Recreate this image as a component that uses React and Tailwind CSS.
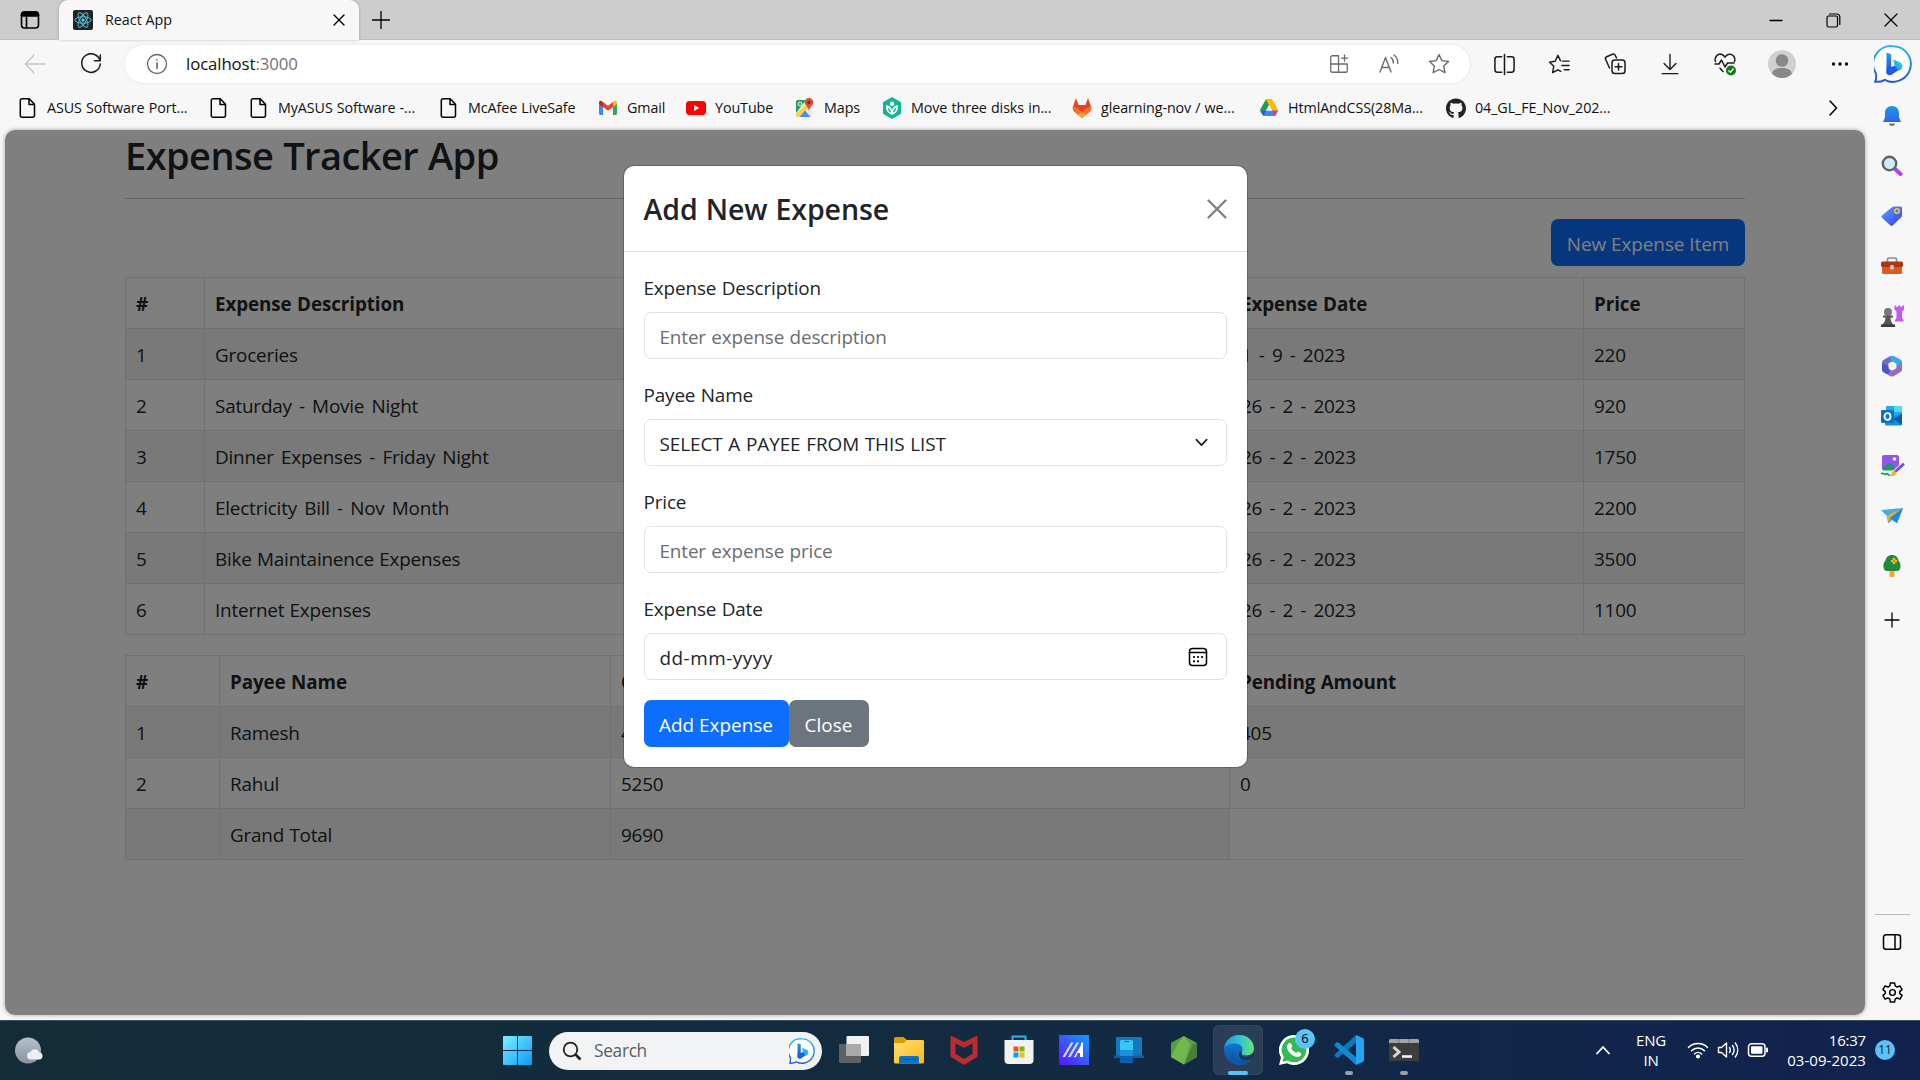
import React from "react";
import { FaGithub } from "react-icons/fa";

const line = { fill: "none", stroke: "currentColor", strokeLinecap: "round", strokeLinejoin: "round" };

/* ---------- browser chrome icons ---------- */

const DocIcon = () => (
  <svg width="20" height="22" viewBox="0 0 20 22" {...line} strokeWidth="1.5">
    <path d="M4 1.8h7.2l5.300 5.400v11.300a1.700 1.700 0 0 1-1.700 1.700H4a1.700 1.700 0 0 1-1.700-1.700v-15A1.700 1.700 0 0 1 4 1.800zM11 2v5.400h5.300" />
  </svg>
);
const GmailIcon = () => (
  <svg width="20" height="20" viewBox="0 0 20 20">
    <path d="M1 5v10.6C1 16.4 1.6 17 2.4 17H5V8z" fill="#4285f4" />
    <path d="M19 5v10.6c0 .8-.6 1.4-1.4 1.4H15V8z" fill="#34a853" />
    <path d="M15 4.3V9l4-3V4.5C19 2.700 17.200 2.200 16 3.200z" fill="#fbbc04" />
    <path d="M5 4.300V9L1 6V4.500C1 2.700 2.800 2.200 4 3.200z" fill="#c5221f" />
    <path d="M5 9V4l5 3.800L15 4v5l-5 3.800z" fill="#ea4335" />
  </svg>
);
const YoutubeIcon = () => (
  <svg width="20" height="20" viewBox="0 0 20 20">
    <rect x="0" y="3" width="20" height="14" rx="3.500" fill="#f00" />
    <path d="M8 7v6l5.200-3z" fill="#fff" />
  </svg>
);
const MapsIcon = () => (
  <svg width="20" height="20" viewBox="0 0 20 20">
    <rect x="1" y="2" width="16" height="17" rx="2" fill="#e8eaed" />
    <path d="M1 4a2 2 0 0 1 2-2h8L1 15z" fill="#1e9e58" />
    <path d="M1 16L14 4l3 2.500L4 19H2.500A1.500 1.500 0 0 1 1 17.500z" fill="#ffd04b" />
    <path d="M4.500 19L10 12.500 15.500 19z" fill="#4a89f3" />
    <circle cx="5" cy="6" r="1.900" fill="none" stroke="#fff" strokeWidth="1" />
    <path d="M14 0a4.300 4.300 0 0 1 4.300 4.300C18.300 7.500 14.700 8.500 14 13c-.7-4.500-4.300-5.500-4.300-8.700A4.300 4.300 0 0 1 14 0z" fill="#e04a3a" />
    <circle cx="14" cy="4.300" r="1.600" fill="#8c1f1a" />
  </svg>
);
const LeafIcon = () => (
  <svg width="20" height="22" viewBox="0 0 20 22">
    <path d="M10 0l9 5.200v11.600L10 22l-9-5.200V5.200z" fill="#0fb597" />
    <circle cx="10" cy="6.800" r="2.200" fill="#fff" />
    <path d="M4 8c-.5 5 1.500 8.300 6 9.800 4.500-1.500 6.500-4.800 6-9.800-3 .5-5 2-6 5-1-3-3-4.500-6-5z" fill="#fff" />
    <path d="M5.800 10.500c.2 2.600 1.200 4.300 3.300 5.300-.2-2.300-1.300-4.300-3.300-5.300zm8.400 0c-.2 2.600-1.200 4.300-3.300 5.300.2-2.300 1.300-4.300 3.300-5.300z" fill="#0fb597" />
  </svg>
);
const GitlabIcon = () => (
  <svg width="20" height="22" viewBox="0 0 20 22">
    <path d="M4 1L1 9.500c-.6 2 0 4 1.500 5.300L10 21l7.500-6.200c1.500-1.300 2.100-3.300 1.500-5.300L16 1l-2.600 7H6.600z" fill="#e24329" />
    <path d="M1 9.500c-.6 2 0 4 1.500 5.300L10 21l7.500-6.200c1.500-1.300 2.100-3.300 1.500-5.300-2 .4-3.500 1.200-5 2.300L10 15l-4-3.200C4.500 10.700 3 9.900 1 9.500z" fill="#fc6d26" />
    <path d="M6 17.700L10 15l4 2.700-4 3.300z" fill="#fca326" />
  </svg>
);
const DriveIcon = () => (
  <svg width="20" height="20" viewBox="0 0 20 20">
    <path d="M6.800 1.500h6.400L4.300 17.500 1 12z" fill="#1e9e50" />
    <path d="M6.800 1.500h6.400L19 12h-6z" fill="#ffba00" />
    <path d="M4 12.500h15l-3 5.500H4.500z" fill="#4285f4" />
    <path d="M1 12.500L4.200 18l3-5.500z" fill="#1967d2" />
    <path d="M19 12.500L16 18l-3-5.500z" fill="#ea4335" />
    <path d="M10 7l3 5.500H7z" fill="#f7f7f7" />
  </svg>
);
const GithubIcon = () => <FaGithub size={21} color="#1f2328" />;

const ReactLogo = () => (
  <svg width="20" height="20" viewBox="0 0 20 20">
    <rect width="20" height="20" rx="2" fill="#222" />
    <g fill="none" stroke="#53c1de" strokeWidth="1">
      <ellipse cx="10" cy="10" rx="8.200" ry="3.200" />
      <ellipse cx="10" cy="10" rx="8.200" ry="3.200" transform="rotate(60 10 10)" />
      <ellipse cx="10" cy="10" rx="8.200" ry="3.200" transform="rotate(120 10 10)" />
    </g>
    <circle cx="10" cy="10" r="1.600" fill="#61dafb" />
  </svg>
);

const BingChat = ({ width, height }) => (
  <svg width={width} height={height} viewBox="0 0 38 38" className="shrink-0">
    <defs>
      <linearGradient id="bingRing" x1="0" y1="0" x2="0" y2="1">
        <stop offset="0" stopColor="#29b6f0" />
        <stop offset="1" stopColor="#2456dd" />
      </linearGradient>
      <linearGradient id="bingStem" x1="0" y1="0" x2="0" y2="1">
        <stop offset="0" stopColor="#2b9cf2" />
        <stop offset="1" stopColor="#1b46d8" />
      </linearGradient>
      <linearGradient id="bingBowl" x1="1" y1="0" x2="0" y2="1">
        <stop offset="0" stopColor="#35e0e0" />
        <stop offset="1" stopColor="#1d8cf0" />
      </linearGradient>
    </defs>
    <path d="M19 1.200a17.800 17.800 0 1 1-8.200 33.600c-2.800 1.700-6 2.200-9.600 2 1.200-2.600 1.200-5 .8-8.300A17.800 17.800 0 0 1 19 1.200z" fill="#fff" stroke="url(#bingRing)" strokeWidth="2" />
    <path d="M12.500 7.500l4.700 1.800v16.500l-4.700 3z" fill="url(#bingStem)" />
    <path d="M12.500 24l9-3.800 5.500 3.300-9.500 6.300c-2.300 1.200-5 0-5-2.500z" fill="#1f5ce8" />
    <path d="M19 14.500l6.500 2.400c3.800 1.600 4 6 .6 8l-1.600.9-3.400-4.100z" fill="url(#bingBowl)" />
  </svg>
);

const Tool = ({ children, w = "w-[55px]", color = "text-[#1b1b1b]" }) => (
  <div className={`flex h-full shrink-0 items-center justify-center ${w} ${color}`}>{children}</div>
);
const Svg = ({ s = 24, sw = 1.4, children }) => (
  <svg width={s} height={s} viewBox="0 0 24 24" {...line} strokeWidth={sw}>{children}</svg>
);

function TabStrip() {
  return (
    <div className="flex h-10 items-stretch bg-[#cdcdcd]">
      <div className="flex w-[59px] items-center justify-center rounded-br-md shadow-[inset_0_-1px_0_#bdbdbd]">
        <svg width="20" height="20" viewBox="0 0 20 20" {...line} strokeWidth="1.600">
          <rect x="1.500" y="2" width="17" height="16" rx="3" />
          <path d="M6.500 6v12" />
          <path d="M1.500 6V5a3 3 0 0 1 3-3h11a3 3 0 0 1 3 3v1z" fill="#000" />
        </svg>
      </div>
      <div className="flex w-[300px] items-center rounded-t-[9px] bg-[#f7f7f7] pr-[11px] pl-[14px] shadow-[0_0_3px_rgba(0,0,0,0.25)]">
        <ReactLogo />
        <span className="ml-[12px] flex-1 text-[14.300px] text-[#111]">React App</span>
        <svg width="18" height="18" viewBox="0 0 18 18" {...line} strokeWidth="1.400"><path d="M4 4l10 10M14 4L4 14" /></svg>
      </div>
      <div className="flex w-[44px] items-center justify-center shadow-[inset_0_-1px_0_#bdbdbd]">
        <svg width="20" height="20" viewBox="0 0 20 20" {...line} strokeWidth="1.300"><path d="M10 1.500v17M1.500 10h17" /></svg>
      </div>
      <div className="flex flex-1 items-center justify-end shadow-[inset_0_-1px_0_#bdbdbd]">
        <div className="flex w-[58px] justify-center"><svg width="14" height="14" {...line} strokeWidth="1.300"><path d="M1 7.500h12" /></svg></div>
        <div className="flex w-[57px] justify-center">
          <svg width="15" height="15" viewBox="0 0 15 15" {...line} strokeWidth="1.200">
            <rect x="1" y="3" width="10.500" height="11" rx="1.500" />
            <path d="M3.500 1h7.500a2.800 2.800 0 0 1 2.800 2.800V11.500" />
          </svg>
        </div>
        <div className="flex w-[58px] justify-center"><svg width="14" height="14" viewBox="0 0 14 14" {...line} strokeWidth="1.200"><path d="M1 1l12 12M13 1L1 13" /></svg></div>
      </div>
    </div>
  );
}

function Toolbar() {
  return (
    <div className="flex h-[48px] items-center">
      <div className="flex w-[70px] justify-center text-[#c4c4c4]">
        <svg width="22" height="22" viewBox="0 0 22 22" {...line} strokeWidth="1.400"><path d="M21 11H1.500M10 2L1.500 11l8.500 9" /></svg>
      </div>
      <div className="flex w-[42px] justify-center text-[#1b1b1b]">
        <svg width="22" height="22" viewBox="0 0 22 22" {...line} strokeWidth="1.500"><path d="M20 7.500A9.300 9.300 0 1 0 20.300 11M20.300 2v5.800H14.500" /></svg>
      </div>
      <div className="ml-[13px] flex h-[38px] w-[1345px] items-center rounded-full bg-white pl-[21px] shadow-[0_0_3px_rgba(0,0,0,0.1)]">
        <svg width="22" height="22" viewBox="0 0 22 22" className="text-[#666]" {...line} strokeWidth="1.300"><circle cx="11" cy="11" r="9.500" /><path d="M11 10v5.500M11 6.700v.2" strokeWidth="1.600" /></svg>
        <span className="ml-[18px] flex-1 text-[16.800px] tracking-[-0.1px] text-[#111]">localhost<span className="text-[#747474]">:3000</span></span>
        <div className="flex w-[156px] items-center text-[#6b6b6b]">
          <Tool w="w-[50px]" color="text-[#6b6b6b]">
            <Svg s={22}><path d="M11.500 3H4.500A1.500 1.500 0 0 0 3 4.500v15A1.500 1.500 0 0 0 4.500 21h15a1.500 1.500 0 0 0 1.500-1.500v-7M3 12h18M11.500 3v18M18 2v7M14.500 5.500h7" /></Svg>
          </Tool>
          <Tool w="w-[50px]" color="text-[#6b6b6b]">
            <Svg s={24}><path d="M3 20L8.500 5.500 14 20M5 15.500h7M14 5.500c1.700 1.300 2.500 3.300 2.300 5.500M17 3c2.800 2 4 5 3.700 8.500" /></Svg>
          </Tool>
          <Tool w="w-[50px]" color="text-[#6b6b6b]">
            <Svg s={24}><path d="M12 2.500l2.900 6.100 6.600.9-4.800 4.600 1.200 6.600-5.900-3.200-5.900 3.200 1.200-6.600L2.500 9.500l6.600-.9z" /></Svg>
          </Tool>
        </div>
      </div>
      <div className="ml-[7px] flex flex-1 items-center">
        <Tool>
          <Svg s={23} sw={1.600}><path d="M9 4H4.500A2.500 2.500 0 0 0 2 6.500v11A2.500 2.500 0 0 0 4.500 20H9M15 4h4.500A2.500 2.500 0 0 1 22 6.500v11a2.500 2.500 0 0 1-2.500 2.500H15M12 1.500v21" /></Svg>
        </Tool>
        <Tool>
          <Svg s={23} sw={1.500}><path d="M15 8.500h7M14.500 13H22M17 17.500h5M13 8l-2.700-5.500L7.500 8.600l-6 .9 4.500 4.400-1.200 6.600 5.500-3 3 1.600" /></Svg>
        </Tool>
        <Tool w="w-[55px]">
          <Svg s={24} sw={1.500}><path d="M6.500 16L2.600 7.300a2 2 0 0 1 1-2.600l6-2.500a2 2 0 0 1 2.600 1L13.500 6" /><rect x="9" y="8" width="13" height="13.500" rx="2.800" /><path d="M15.500 11.500v6.500M12.200 14.800h6.600" /></Svg>
        </Tool>
        <Tool>
          <Svg s={22} sw={1.500}><path d="M12 1.500v16M5.500 11.500l6.500 6.500 6.500-6.500M3.500 22.500h17" /></Svg>
        </Tool>
        <Tool>
          <svg width="24" height="26" viewBox="0 0 24 26" {...line} strokeWidth="1.500">
            <path d="M10 20.500L7 17.200M2.500 10.500C1 6 5 2 9 3.500c1.500.6 2.300 1.500 3 2.700.700-1.200 1.500-2.100 3-2.700 4-1.500 8 2.500 6.500 7M2 13h4l2.500-4 3.500 7 2.500-4h6.500" />
            <circle cx="18" cy="19.500" r="5" fill="#107c10" stroke="none" />
            <path d="M15.800 19.700l1.600 1.500 2.800-3.200" stroke="#fff" strokeWidth="1.300" />
          </svg>
        </Tool>
        <Tool w="w-[60px]">
          <svg width="28" height="28" viewBox="0 0 28 28">
            <circle cx="14" cy="14" r="14" fill="#d2d0ce" />
            <circle cx="14" cy="10.500" r="6.300" fill="#8a8886" />
            <path d="M4 23.800C5 19.500 9 18 14 18s9 1.500 10 5.800A14 14 0 0 1 14 28a14 14 0 0 1-10-4.200z" fill="#8a8886" />
          </svg>
        </Tool>
        <Tool w="w-[56px]">
          <svg width="20" height="6" viewBox="0 0 20 6"><circle cx="3.500" cy="3" r="1.700" /><circle cx="10" cy="3" r="1.700" /><circle cx="16.500" cy="3" r="1.700" /></svg>
        </Tool>
        <Tool w="w-[49px]"><BingChat width={38} height={38} /></Tool>
      </div>
    </div>
  );
}

const bookmarks = [
  [DocIcon, "ASUS Software Port...", "w-[191px]"],
  [DocIcon, "", "w-[40px]"],
  [DocIcon, "MyASUS Software -...", "w-[190px]"],
  [DocIcon, "McAfee LiveSafe", "w-[159px]"],
  [GmailIcon, "Gmail", "w-[88px]"],
  [YoutubeIcon, "YouTube", "w-[109px]"],
  [MapsIcon, "Maps", "w-[87px]"],
  [LeafIcon, "Move three disks in...", "w-[190px]"],
  [GitlabIcon, "glearning-nov / we...", "w-[187px]"],
  [DriveIcon, "HtmlAndCSS(28Ma...", "w-[187px]"],
  [GithubIcon, "04_GL_FE_Nov_202...", "w-[190px]"],
];

function Bookmarks() {
  return (
    <div className="flex h-[40px] items-center pl-[18px]">
      {bookmarks.map(([Icon, text, w], i) => (
        <div key={i} className={`flex shrink-0 items-center gap-[9px] ${w}`}>
          <div className="flex w-5 shrink-0 justify-center"><Icon /></div>
          {text && <span className="text-[14.300px] tracking-[-0.080px] [word-spacing:0.500px] whitespace-nowrap text-[#111]">{text}</span>}
        </div>
      ))}
      <div className="flex flex-1 justify-end pr-[80px]">
        <svg width="14" height="18" viewBox="0 0 14 18" {...line} strokeWidth="1.500"><path d="M4 2L10.500 9 4 16" /></svg>
      </div>
    </div>
  );
}

/* ---------- edge sidebar ---------- */

const side = [
  <svg width="22" height="22" viewBox="0 0 22 22"><defs><linearGradient id="bell" x1="0" y1="0" x2="0" y2="1"><stop stopColor="#1c9be6" /><stop offset="1" stopColor="#2b63ea" /></linearGradient></defs><path d="M8 18.500h6a3 2.500 0 0 1-6 0z" fill="#777" /><path d="M11 1c4.500 0 7 3 7 7v4.500l2 4.500H2l2-4.500V8c0-4 2.500-7 7-7z" fill="url(#bell)" /></svg>,
  <svg width="22" height="22" viewBox="0 0 22 22"><path d="M14.500 14.500l5 4.500" stroke="#b43ef5" strokeWidth="4" strokeLinecap="round" /><circle cx="8.500" cy="8.500" r="6.700" fill="#cfeafc" stroke="#636363" strokeWidth="2.400" /></svg>,
  <svg width="22" height="22" viewBox="0 0 22 22"><defs><linearGradient id="tag" x1="0" y1="0" x2="1" y2="1"><stop stopColor="#5aa0fb" /><stop offset="1" stopColor="#3a3cf0" /></linearGradient></defs><path d="M13 1.500h6.500A1.500 1.500 0 0 1 21 3v7.500a2 2 0 0 1-.6 1.400L12 20.300a2 2 0 0 1-2.800 0L1.200 13a2 2 0 0 1 0-2.700l9.800-8a3 3 0 0 1 2-.8z" fill="url(#tag)" /><circle cx="16" cy="6" r="2.300" fill="#4b76e8" stroke="#f7c92e" strokeWidth="1.500" /></svg>,
  <svg width="24" height="22" viewBox="0 0 24 22"><path d="M7.500 7V4.500A1.500 1.500 0 0 1 9 3h6a1.500 1.500 0 0 1 1.500 1.500V7" fill="none" stroke="#8c8c8c" strokeWidth="1.600" /><rect x="2" y="11" width="20" height="8" rx="1.500" fill="#db5a20" /><rect x="1" y="6.500" width="22" height="5.500" rx="1.500" fill="#ad3510" /><rect x="10.200" y="10" width="3.600" height="4.500" rx="1" fill="#ccc" /></svg>,
  <svg width="24" height="24" viewBox="0 0 24 24"><path d="M14.500 1.500h1.800V3h1.700V1.500h2.400V3h1.700V1.500h1.900v4.300L22 7.500V14l1.500 2v1.500H15V16l1.500-2V7.500l-2-1.700z" fill="#c45af2" /><circle cx="8" cy="8" r="4" fill="#777" /><path d="M3 11.500h10v2h-2.500c0 3 1 5 3 7.500V23H2v-2c2.500-2.500 3.500-4.500 3.500-7.500H3z" fill="#555" /><path d="M1 20.500h14V23H1z" fill="#3b3b3b" /></svg>,
  <svg width="22" height="22" viewBox="0 0 22 22">
    <path d="M8.500 1.500L2.500 5A3 3 0 0 0 1 7.600v7.200L6.500 17l2-2.500-1-1.500V8.500L12 6V1z" fill="#6f6bd2" />
    <path d="M8.500 1.500a5 5 0 0 1 5-.2l6 3.500A3 3 0 0 1 21 7.500v7l-5.500-2.500V9L11 6.500z" fill="#3da5ea" />
    <path d="M21 8v6.500a3 3 0 0 1-1.500 2.600L13 21a4 4 0 0 1-4 0l-5-3 3.500-3.500 4 1 4-2.500V11z" fill="#9a6cc6" />
    <path d="M1 8.500v6.200a3 3 0 0 0 1.500 2.600l2.500 1.400c1.700.8 3 0 3.500-1.500l.5-2.200-1.500-1.500V11z" fill="#4757c4" />
    <circle cx="11.300" cy="10.800" r="3.700" fill="#f7f7f7" />
  </svg>,
  <svg width="22" height="22" viewBox="0 0 22 22"><rect x="5" y="1" width="16" height="14" rx="1" fill="#28a8ea" /><path d="M13 1h8v6h-8z" fill="#50d9ff" /><path d="M4 13l9-2 8-3v11a1.500 1.500 0 0 1-1.500 1.500H5.500A1.500 1.500 0 0 1 4 19z" fill="#1490df" /><path d="M21 9v11L12 14z" fill="#0a5ea8" /><rect x="0" y="5" width="13" height="13" rx="1.200" fill="#0b72c8" /><ellipse cx="6.500" cy="11.500" rx="3" ry="3.300" fill="none" stroke="#fff" strokeWidth="1.800" /></svg>,
  <svg width="25" height="24" viewBox="0 0 25 24"><rect x="2" y="1" width="17" height="15" rx="2" fill="#9354ec" /><circle cx="14.500" cy="5" r="1.800" fill="#fff" /><path d="M2 15l5.500-5.200c1.300-1 2.300-1 3.500 0L15 13l-3 3.500H3.500z" fill="#199a63" /><path d="M1 20c2.500-2 3 1.500 5 0s2 2 4 1" fill="none" stroke="#199a63" strokeWidth="1.600" /><path d="M23.200 10.200L16 16.800" stroke="#f7f7f7" strokeWidth="4.200" strokeLinecap="round" /><path d="M23 10.500L16 17" stroke="#6257ee" strokeWidth="3" strokeLinecap="round" /><path d="M13.500 16l3.300 3c-1 2.500-3.300 3.500-6.800 3 1.800-1.800 1.500-4.500 3.500-6z" fill="#f6b32a" /></svg>,
  <svg width="22" height="22" viewBox="0 0 22 22"><path d="M0 5l22-2-6 15-5-3-3.500 3.500-2-8z" fill="#3aaef0" /><path d="M22 3L6 10.500 7 18l2-5z" fill="#f5a61d" /><path d="M22 3l-6 15-7-5z" fill="#2286e6" /></svg>,
  <svg width="22" height="24" viewBox="0 0 22 24"><path d="M8.500 14h5v8a1 1 0 0 1-1 1h-3a1 1 0 0 1-1-1z" fill="#f3a81d" /><path d="M11 1c4 0 6 2.500 6.500 5.500C20.500 9 20.500 17 16 17H6C1.500 17 1.500 9 4.500 6.500 5 3.500 7 1 11 1z" fill="#21893b" /><path d="M13 5v4M11 7h4" stroke="#f9bd1c" strokeWidth="2.600" strokeLinecap="round" /><circle cx="13" cy="7" r="1" fill="#d86a10" /></svg>,
];

function Sidebar() {
  return (
    <aside className="flex w-[54px] flex-col items-center">
      <div className="-mt-[40px] flex flex-col items-center pt-px">
        {side.map((icon, i) => (
          <div key={i} className="flex h-[50px] items-center justify-center">{icon}</div>
        ))}
        <div className="flex h-[57px] items-center justify-center">
          <svg width="16" height="16" viewBox="0 0 16 16" {...line} strokeWidth="1.300"><path d="M8 1v14M1 8h14" /></svg>
        </div>
      </div>
      <div className="mt-auto flex flex-col items-center pb-[3px]">
        <div className="mb-[2px] h-px w-[35px] bg-[#b9b9b9]" />
        <div className="flex h-[50px] items-center">
          <svg width="20" height="18" viewBox="0 0 20 18" {...line} strokeWidth="1.500"><rect x="1.500" y="1.800" width="17" height="14.400" rx="2.500" /><path d="M13 2v14" /></svg>
        </div>
        <div className="flex h-[50px] items-center">
          <svg width="23" height="23" viewBox="0 0 24 24" {...line} strokeWidth="1.500">
            <path d="M9.800 2h4.400l.6 3.200 1.900 1.100 3.100-1.100 2.200 3.800-2.500 2.100v1.800l2.500 2.100-2.200 3.800-3.100-1.100-1.900 1.100-.6 3.200H9.800l-.6-3.200-1.900-1.100-3.100 1.100L2 15l2.500-2.100v-1.800L2 9l2.200-3.800 3.100 1.100 1.900-1.100z" />
            <circle cx="12" cy="12" r="3" />
          </svg>
        </div>
      </div>
    </aside>
  );
}

/* ---------- page ---------- */

const expenses = [
  ["1", "Groceries", "Ramesh", "1 - 9 - 2023", "220"],
  ["2", "Saturday - Movie Night", "Ramesh", "26 - 2 - 2023", "920"],
  ["3", "Dinner Expenses - Friday Night", "Rahul", "26 - 2 - 2023", "1750"],
  ["4", "Electricity Bill - Nov Month", "Ramesh", "26 - 2 - 2023", "2200"],
  ["5", "Bike Maintainence Expenses", "Rahul", "26 - 2 - 2023", "3500"],
  ["6", "Internet Expenses", "Ramesh", "26 - 2 - 2023", "1100"],
];

const cell = "h-[51px] border border-[#dee2e6] px-[10px] pt-[2px] text-left";
const th = `${cell} font-bold text-[18.800px] tracking-[-0.070px]`;
const dashed = `${cell} [word-spacing:2.500px]`;

function ExpenseTable() {
  return (
    <table className="mt-[11px] w-full table-fixed border-collapse">
      <colgroup><col className="w-[79px]" /><col className="w-[620px]" /><col className="w-[406px]" /><col className="w-[353px]" /><col /></colgroup>
      <thead>
        <tr><th className={th}>#</th><th className={th}>Expense Description</th><th className={th}></th><th className={th}>Expense Date</th><th className={th}>Price</th></tr>
      </thead>
      <tbody>
        {expenses.map(([n, d, , date, price]) => (
          <tr key={n} className="odd:bg-[#f2f2f2]">
            <td className={cell}>{n}</td><td className={d.includes("-") ? dashed : cell}>{d}</td><td className={cell}></td><td className={dashed}>{date}</td><td className={cell}>{price}</td>
          </tr>
        ))}
      </tbody>
    </table>
  );
}

function PayeeTable() {
  return (
    <table className="mt-5 w-full table-fixed border-collapse border-b border-[#dee2e6]">
      <colgroup><col className="w-[94px]" /><col className="w-[391px]" /><col className="w-[619px]" /><col /></colgroup>
      <thead>
        <tr><th className={th}>#</th><th className={th}>Payee Name</th><th className={th}>Contributed Amount</th><th className={th}>Pending Amount</th></tr>
      </thead>
      <tbody>
        <tr className="bg-[#f2f2f2]"><td className={cell}>1</td><td className={cell}>Ramesh</td><td className={cell}>4440</td><td className={cell}>405</td></tr>
        <tr><td className={cell}>2</td><td className={cell}>Rahul</td><td className={cell}>5250</td><td className={cell}>0</td></tr>
        <tr><td className={`${cell} bg-[#f2f2f2]`}></td><td className={`${cell} bg-[#f2f2f2]`}>Grand Total</td><td className={`${cell} bg-[#f2f2f2]`}>9690</td></tr>
      </tbody>
    </table>
  );
}

const Field = ({ label, children }) => (
  <div className="mb-5">
    <div className="h-10 leading-[33px]">{label}</div>
    <div className="flex h-[47px] items-center rounded-[7px] border border-[#dee2e6] px-[15px] pt-[3px]">{children}</div>
  </div>
);

function Modal() {
  return (
    <div className="mt-[36px] h-[601px] w-[623px] rounded-[10px] bg-white tracking-[-0.140px] shadow-[0_0_0_1px_rgba(0,0,0,0.2)]">
      <div className="flex h-[86px] items-center justify-between border-b border-[#dee2e6] px-5">
        <h4 className="pt-[2px] text-[28.500px] font-semibold tracking-[-0.050px]">Add New Expense</h4>
        <svg width="20" height="20" viewBox="0 0 20 20" {...line} className="text-[#7f7f7f]" strokeWidth="2.300"><path d="M1.500 1.500l17 17M18.500 1.500l-17 17" /></svg>
      </div>
      <div className="p-5">
        <Field label="Expense Description"><span className="text-[#6a6e72]">Enter expense description</span></Field>
        <Field label="Payee Name">
          <span className="flex-1 tracking-[-0.050px] [word-spacing:0.800px]">SELECT A PAYEE FROM THIS LIST</span>
          <svg width="15" height="15" viewBox="0 0 16 16" {...line} strokeWidth="1.900" className="mr-[2px] mb-[3px]"><path d="M2.500 5L8 10.800 13.500 5" /></svg>
        </Field>
        <Field label="Price"><span className="text-[#6a6e72]">Enter expense price</span></Field>
        <Field label="Expense Date">
          <span className="flex-1 tracking-[0.500px]">dd-mm-yyyy</span>
          <svg width="20" height="20" viewBox="0 0 20 20" {...line} strokeWidth="1.500" className="mr-[3px] mb-[3px] text-black">
            <rect x="1.500" y="1.500" width="17" height="17" rx="3" /><path d="M1.500 5.500h17" />
            <path d="M6 10h.1M10 10h.1M14 10h.1M6 14.300h.1M10 14.300h.1" strokeWidth="2.200" />
          </svg>
        </Field>
        <div className="flex h-[47px] tracking-[0.030px] text-white">
          <button className="w-[145px] rounded-[7px] bg-[#0d6efd] pt-[3px]">Add Expense</button>
          <button className="w-[80px] rounded-[7px] bg-[#6c757d] pt-[3px]">Close</button>
        </div>
      </div>
    </div>
  );
}

function Page() {
  return (
    <main className="relative ml-[5px] h-[885px] w-[1860px] overflow-hidden rounded-[10px] bg-white text-[18.900px] tracking-[-0.200px] [word-spacing:0.600px] text-[#212529] shadow-[0_0_4px_rgba(0,0,0,0.35)]">
      <div className="mx-auto w-[1620px]">
        <h2 className="h-[48px] text-[38px] leading-[50px] font-semibold tracking-[-0.560px]">Expense Tracker App</h2>
        <div className="mt-5 h-px bg-[#c8c9ca]" />
        <div className="mt-5 flex justify-end">
          <button className="h-[47px] w-[194px] rounded-[7px] bg-[#0d6efd] pt-[3px] tracking-[-0.050px] text-white">New Expense Item</button>
        </div>
        <ExpenseTable />
        <PayeeTable />
      </div>
      <div className="absolute inset-0 flex items-start justify-center bg-black/50">
        <Modal />
      </div>
    </main>
  );
}

/* ---------- taskbar ---------- */

const StartIcon = () => (
  <svg width="29" height="29" viewBox="0 0 29 29">
    <defs><linearGradient id="win" x1="0" y1="0" x2="1" y2="1"><stop stopColor="#7ff0ff" /><stop offset="1" stopColor="#0a98fa" /></linearGradient></defs>
    <path d="M1 0h13v14H0V1a1 1 0 0 1 1-1zM15 0h13a1 1 0 0 1 1 1v13H15zM0 15h14v14H1a1 1 0 0 1-1-1zM15 15h14v13a1 1 0 0 1-1 1H15z" fill="url(#win)" />
  </svg>
);

const taskIcons = [
  <svg width="30" height="30" viewBox="0 0 30 30"><rect x="0" y="9" width="22" height="19" rx="1" fill="#5f6062" /><rect x="7.500" y="1" width="22.500" height="20" rx="1" fill="#f1f1f1" /><path d="M7.500 9H22v12H8.500a1 1 0 0 1-1-1z" fill="#a9aaab" /></svg>,
  <svg width="30" height="30" viewBox="0 0 30 30"><defs><linearGradient id="fold" x1="0" y1="0" x2="1" y2="1"><stop stopColor="#ffdf73" /><stop offset="1" stopColor="#f9b916" /></linearGradient></defs><path d="M0 3.500A1.500 1.500 0 0 1 1.500 2h8l3.500 3h15.500A1.500 1.500 0 0 1 30 6.500V12H0z" fill="#dc9a06" /><path d="M0 8h10l3-3h15.500A1.500 1.500 0 0 1 30 6.500V27a1.500 1.500 0 0 1-1.500 1.500h-27A1.500 1.500 0 0 1 0 27z" fill="url(#fold)" /><path d="M5 28.500V23a2 2 0 0 1 2-2h16a2 2 0 0 1 2 2v5.500z" fill="#0f72c6" /><path d="M8.500 24.500h13" stroke="#064f91" /></svg>,
  <svg width="28" height="30" viewBox="0 0 28 30"><path d="M.5.5L14 7 27.500.5v21.200L14 30 .5 21.700zM5.500 8.500v10.200L14 24l8.500-5.300V8.500L14 12.700z" fill="#bf2a2c" fillRule="evenodd" /></svg>,
  <svg width="30" height="30" viewBox="0 0 30 30"><path d="M8.500 6V1.500h13V6" fill="none" stroke="#27b3ee" strokeWidth="2" /><path d="M.5 5h29v20a4 4 0 0 1-4 4h-21a4 4 0 0 1-4-4z" fill="#f1f1f1" /><rect x="9.500" y="11.500" width="5" height="5" fill="#f25022" /><rect x="15.500" y="11.500" width="5" height="5" fill="#7fba00" /><rect x="9.500" y="17.500" width="5" height="5" fill="#00a4ef" /><rect x="15.500" y="17.500" width="5" height="5" fill="#ffb900" /></svg>,
  <svg width="30" height="30" viewBox="0 0 30 30"><defs><linearGradient id="asus" x1="0" y1="1" x2="1" y2="0"><stop stopColor="#5b12ff" /><stop offset=".5" stopColor="#3b59ff" /><stop offset="1" stopColor="#08a0ff" /></linearGradient></defs><rect width="30" height="30" fill="url(#asus)" /><path d="M3.500 22L12 7.500h2.500L6 22zM9 22L17.500 7.500H20L11.500 22z" fill="#dcd8ff" /><path d="M15 22l7-12V7.500h2V22h-3v-4h-2.500L17 22z" fill="#fff" /></svg>,
  <svg width="30" height="30" viewBox="0 0 30 30"><rect x="2" y="2" width="26" height="19" rx="1" fill="#1577bd" /><path d="M0 20.500h30V22a1 1 0 0 1-1 1H1a1 1 0 0 1-1-1z" fill="#125d9c" /><rect x="6" y="5" width="13" height="23" rx="1.500" fill="#1a91dc" /><path d="M6 6.500A1.500 1.500 0 0 1 7.500 5h10A1.500 1.500 0 0 1 19 6.500V15H6z" fill="#37c8f2" /><path d="M6 21h13v6a1 1 0 0 1-1 1H7a1 1 0 0 1-1-1z" fill="#0c5fae" /><path d="M10 6.500h5" stroke="#0c5fae" /></svg>,
  <svg width="28" height="30" viewBox="0 0 28 30"><path d="M14 1l13 7v14l-13 7.500L1 22V8z" fill="#5f9f43" /><path d="M14 1l6 8-6 20.500L1 22l4-14z" fill="#73b84e" /><path d="M14 1L1 8v14l7-14z" fill="#52a03b" /><path d="M27 8v14l-13 7.500L23 9z" fill="#477d3d" /></svg>,
  <svg width="30" height="30" viewBox="0 0 30 30"><defs><linearGradient id="edgeTop" x1="0" y1="0" x2="1" y2="0"><stop stopColor="#2494e4" /><stop offset=".5" stopColor="#2fc3d6" /><stop offset="1" stopColor="#6be26c" /></linearGradient><linearGradient id="edgeLow" x1="0" y1="0" x2="0" y2="1"><stop stopColor="#1287de" /><stop offset="1" stopColor="#0d4ea0" /></linearGradient></defs><circle cx="15" cy="15" r="15" fill="url(#edgeLow)" /><path d="M30 13.500V22l-3 .5-7-2z" fill="#21374b" /><path d="M.3 13C1.300 5.500 7.300 0 15 0c9 0 15 6 15 13.500 0 4-3 7-7 7-3.500 0-5.500-1-5.500-2.500 0-1 1-1.500 1-4S16 8.500 11 8.500C6 8.500 2 10 .3 13z" fill="url(#edgeTop)" /><path d="M11 13c-3 2.500-2.500 9 1 12.500s9 3.500 14.500-.5c.7-.6 1-.3.5.500A15 15 0 0 1 15 30C9.500 29 7 24 8 19c.5-2.500 1.500-5 3-6z" fill="#0c59a4" /><path d="M18 16.500c-1 2-.5 3.500 1 4.500 2.500 1.500 6 1.200 9.500-.5.600-.2.700 0 .5.500-1 2.500-2.500 3.500-3.500 4-6 1.500-10.500-1.500-10.500-6 0-1.500.5-2.500 3-2.500z" fill="#21374b" /></svg>,
  <svg width="30" height="30" viewBox="0 0 30 30"><path d="M15 0a15 15 0 1 1-7 28.200L0 30l2-7.500A15 15 0 0 1 15 0z" fill="#fff" /><path d="M15 2.500A12.400 12.400 0 1 1 8.500 25.500l-5 1.300 1.300-4.900A12.400 12.400 0 0 1 15 2.500z" fill="#35bb55" /><path d="M10.500 8c.7-.3 1.400 0 1.700.7l1 2.400c.2.600-.9 1.600-1.200 2 1.200 2.300 2.900 3.900 5.300 5 .5-.6 1.200-1.700 1.800-1.500l2.600 1.300c.7.300.6 1.200.3 2-.7 1.500-2.500 2.200-4 2C12.700 21 8.500 16.500 8 12.200c-.2-1.800 1-3.700 2.500-4.200z" fill="#fff" /></svg>,
  <svg width="30" height="30" viewBox="0 0 30 30"><path d="M.8 19.200L22 0v8L4.500 22.500a1.500 1.500 0 0 1-2 0L.8 21a1.200 1.200 0 0 1 0-1.800z" fill="#0b76bd" /><path d="M.8 9.200l1.700-1.600a1.500 1.500 0 0 1 2 0L22 22v8L.8 11a1.200 1.200 0 0 1 0-1.800z" fill="#1288d4" /><path d="M22 0l7 3.200a2 2 0 0 1 1 1.700v20.200a2 2 0 0 1-1 1.700L22 30z" fill="#27a5f2" /></svg>,
  <svg width="30" height="30" viewBox="0 0 30 30"><rect x="0" y="4" width="30" height="22" rx="1.500" fill="#3d3d3d" /><path d="M1.500 4h27A1.500 1.500 0 0 1 30 5.500V8H0V5.500A1.500 1.500 0 0 1 1.500 4z" fill="#a3a3a3" /><path d="M20 4v4M10 4v4" stroke="#777" /><path d="M4.500 12l5.500 5-5.500 5" fill="none" stroke="#d6d6d6" strokeWidth="3" /><path d="M13 21.500h10" stroke="#f2f2f2" strokeWidth="2.600" /></svg>,
];

function Taskbar() {
  return (
    <footer className="flex h-[60px] items-center border-t border-[#3c4f5b] bg-linear-to-r from-[#132d38] via-[#132b40] to-[#11224f] text-white">
      <div className="w-[503px] pl-[14px]">
        <svg width="30" height="28" viewBox="0 0 30 28">
          <defs><linearGradient id="moon" x1="0" y1="0" x2="0" y2="1"><stop stopColor="#b6bfca" /><stop offset="1" stopColor="#8c939e" /></linearGradient></defs>
          <circle cx="14" cy="13.500" r="13" fill="url(#moon)" />
          <path d="M16 22.500a4 4 0 0 1 .5-7.800 5 5 0 0 1 9 .8 3.600 3.600 0 0 1 .5 7z" fill="#eceff3" />
        </svg>
      </div>
      <StartIcon />
      <div className="ml-[17px] flex h-[38px] w-[273px] items-center rounded-full bg-[#f1f3f5] pr-[7px] pl-[13px]">
        <svg width="20" height="20" viewBox="0 0 20 20" fill="none" stroke="#222" strokeWidth="1.800"><circle cx="8.500" cy="8.500" r="6.800" /><path d="M13.500 13.500l5 5" strokeWidth="2.600" /></svg>
        <span className="ml-[12px] flex-1 text-[17.300px] tracking-[-0.300px] text-[#5b5d60]">Search</span>
        <BingChat width={26} height={26} />
      </div>
      <div className="ml-[4px] flex">
        {taskIcons.map((icon, i) => (
          <div key={i} className="relative flex h-[59px] w-[55px] items-center justify-center">
            {i === 7 && <div className="absolute top-[4px] left-[2px] h-[50px] w-[50px] rounded-md border border-white/5 bg-white/10" />}
            <div className="relative -top-px">{icon}</div>
            {i === 7 && <div className="absolute bottom-[5px] left-[17px] h-1 w-5 rounded-full bg-[#5cc3f9]" />}
            {i > 8 && <div className="absolute bottom-[5px] left-[24px] h-1 w-2 rounded-full bg-[#9aa0a8]" />}
            {i === 8 && <div className="absolute top-[8px] left-[29px] flex h-5 w-5 items-center justify-center rounded-full bg-[#5cc3f9] text-[13px] text-black">6</div>}
          </div>
        ))}
      </div>
      <div className="ml-auto flex items-center pb-[2px] text-[15px] leading-5 tracking-[-0.200px]">
        <svg width="16" height="10" viewBox="0 0 16 10" {...line} strokeWidth="1.800"><path d="M2 8.500L8 2l6 6.500" /></svg>
        <div className="ml-[24px] w-[32px] text-center">ENG<br />IN</div>
        <svg className="ml-[20px]" width="22" height="18" viewBox="0 0 22 18" {...line} strokeWidth="1.500"><path d="M1.500 6.500c5-5.300 14-5.300 19 0M4.500 9.800c3.500-3.700 9.500-3.700 13 0M7.500 13c2-2 5-2 7 0" /><circle cx="11" cy="15.500" r="1.300" fill="#fff" /></svg>
        <svg className="ml-[8px]" width="22" height="18" viewBox="0 0 22 18" {...line} strokeWidth="1.400"><path d="M1.500 6.500h3l5-4.500v14l-5-4.500h-3zM12.500 6.500c1 1.500 1 3.500 0 5M15.500 4.500c2 2.700 2 6.300 0 9M18.300 2c3.200 4.200 3.200 9.800 0 14" /></svg>
        <svg className="ml-[8px]" width="22" height="16" viewBox="0 0 22 16" {...line} strokeWidth="1.500"><rect x="1.500" y="1.800" width="16.500" height="12.400" rx="3" /><rect x="4" y="4.300" width="11.500" height="7.400" rx="1" fill="#fff" stroke="none" /><path d="M20 6.500v3" strokeWidth="2" /></svg>
        <div className="ml-[17px] w-[80px] text-right">16:37<br /><span className="tracking-[0.050px] whitespace-nowrap">03-09-2023</span></div>
        <div className="mr-[25px] ml-[9px] flex h-5 w-5 items-center justify-center rounded-full bg-[#5cc3f9] text-[12px] text-[#123]">11</div>
      </div>
    </footer>
  );
}

export default function App() {
  return (
    <div className="flex h-[1080px] w-[1920px] flex-col overflow-hidden bg-[#f7f7f7] font-['Open_Sans','Noto_Sans',sans-serif] text-black">
      <TabStrip />
      <Toolbar />
      <Bookmarks />
      <div className="flex h-[892px] pt-[2px]">
        <Page />
        <Sidebar />
      </div>
      <Taskbar />
    </div>
  );
}
